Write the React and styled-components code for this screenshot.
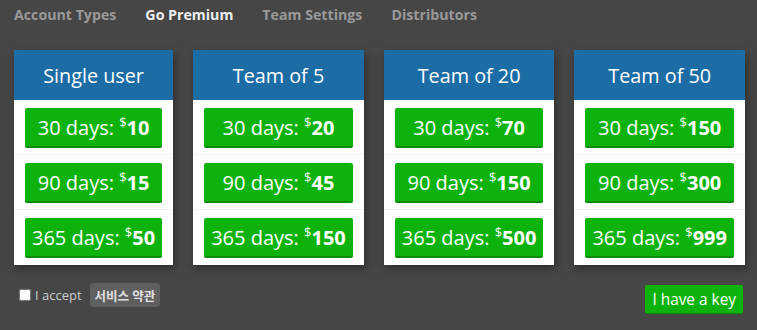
import React from 'react';
import styled, { createGlobalStyle } from 'styled-components';

const GlobalStyle = createGlobalStyle`
  body {
    margin: 0;
    background-color: #464646;
    font-family: 'Open Sans', 'Noto Sans CJK KR', sans-serif;
  }
`;

const Page = styled.div`
  width: 757px;
  height: 330px;
  box-sizing: border-box;
  padding: 0 14px;
`;

const Nav = styled.nav`
  display: flex;
  gap: 29px;
  height: 50px;
  padding-top: 5px;
  box-sizing: border-box;
`;

const NavItem = styled.span`
  font-size: 14.2px;
  font-weight: 700;
  line-height: 20px;
  color: ${props => (props.active ? '#eeeeee' : '#999999')};
`;

const Plans = styled.div`
  display: flex;
  align-items: flex-start;
  gap: 20px;
`;

const Card = styled.div`
  background-color: #ffffff;
  box-shadow: 2px 4px 8px rgba(0, 0, 0, 0.35);
`;

const CardHeader = styled.div`
  background-color: #1c6ca6;
  color: #ffffff;
  height: 50px;
  display: flex;
  align-items: center;
  justify-content: center;
  font-size: 19.8px;
`;

const Row = styled.div`
  padding: 8px 11px 6px;
  border-bottom: 1px solid ${props => (props.last ? 'transparent' : '#f3f3f3')};
`;

const PriceButton = styled.button`
  display: block;
  width: 100%;
  height: 40px;
  padding: 0 7px;
  white-space: nowrap;
  background-color: #0db20d;
  border: none;
  border-bottom: 2px solid #0a8c0a;
  border-radius: 2px;
  color: #ffffff;
  font-family: inherit;
  font-size: 20px;
  cursor: pointer;

  sup {
    font-size: 13px;
    vertical-align: 8px;
    line-height: 0;
  }

  b {
    font-weight: 700;
  }
`;

const Footer = styled.div`
  display: flex;
  align-items: flex-start;
  justify-content: space-between;
  margin-top: 18px;
  padding-left: 5px;
`;

const Accept = styled.label`
  display: flex;
  align-items: center;
  gap: 4px;
  color: #cccccc;
  font-size: 13px;
`;

const Check = styled.input`
  margin: 0;
  width: 12px;
  height: 12px;
`;

const TermsButton = styled.button`
  margin-left: 4px;
  height: 24px;
  padding: 0 5px;
  background-color: #5f5f5f;
  border: none;
  border-radius: 3px;
  color: #e0e0e0;
  font-family: inherit;
  font-size: 12.5px;
  font-weight: 700;
`;

const KeyButton = styled.button`
  height: 29px;
  padding: 0 7px;
  background-color: #0db20d;
  border: none;
  border-bottom: 1px solid #0a8c0a;
  border-radius: 2px;
  color: #ffffff;
  font-family: inherit;
  font-size: 15.4px;
  margin-top: 2px;
`;

const tabs = ['Account Types', 'Go Premium', 'Team Settings', 'Distributors'];

const plans = [
  { name: 'Single user', prices: [10, 15, 50] },
  { name: 'Team of 5', prices: [20, 45, 150] },
  { name: 'Team of 20', prices: [70, 150, 500] },
  { name: 'Team of 50', prices: [150, 300, 999] },
];

const durations = [30, 90, 365];

const App = () => (
  <Page>
    <GlobalStyle />
    <Nav>
      {tabs.map(t => (
        <NavItem key={t} active={t === 'Go Premium'}>
          {t}
        </NavItem>
      ))}
    </Nav>
    <Plans>
      {plans.map(plan => (
        <Card key={plan.name}>
          <CardHeader>{plan.name}</CardHeader>
          {plan.prices.map((price, i) => (
            <Row key={i} last={i === plan.prices.length - 1}>
              <PriceButton>
                {durations[i]} days: <sup>$</sup>
                <b>{price}</b>
              </PriceButton>
            </Row>
          ))}
        </Card>
      ))}
    </Plans>
    <Footer>
      <Accept>
        <Check type="checkbox" />I accept
        <TermsButton>서비스 약관</TermsButton>
      </Accept>
      <KeyButton>I have a key</KeyButton>
    </Footer>
  </Page>
);

export default App;
